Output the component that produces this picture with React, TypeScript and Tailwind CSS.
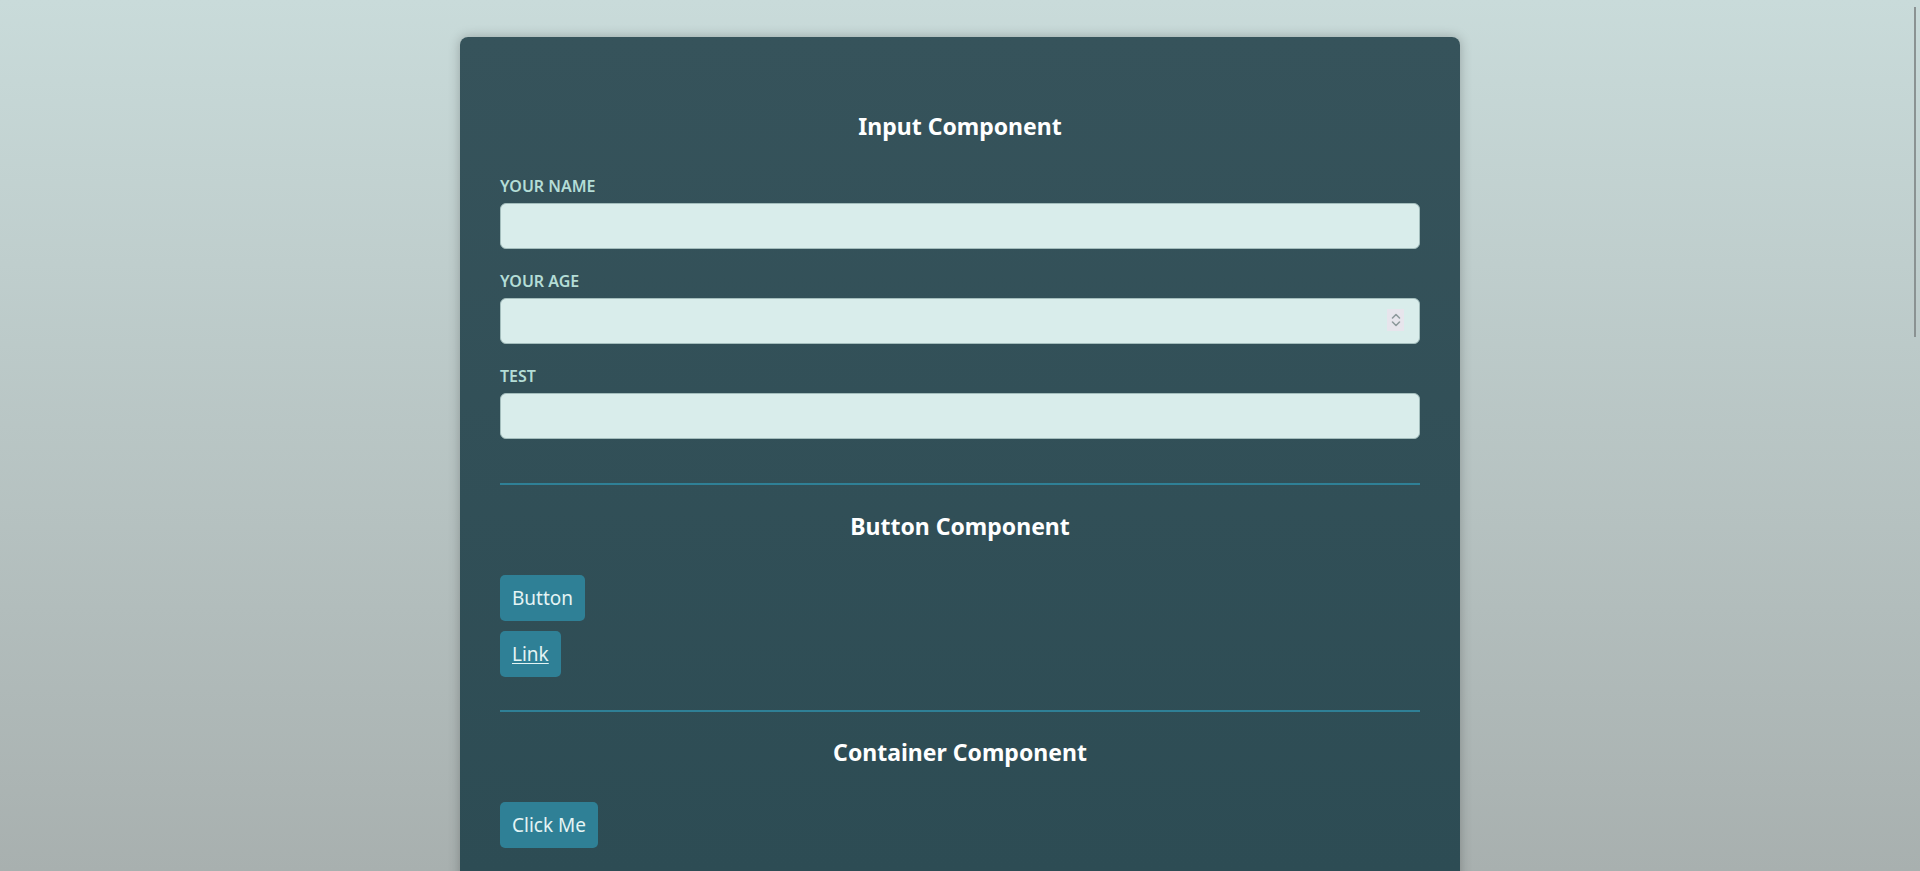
import React from "react";

function Field({ label, children }: { label: string; children: React.ReactNode }) {
  return (
    <div>
      <label className="block text-base leading-6 font-semibold text-[#b4ddd6] mb-[5px]">{label}</label>
      {children}
    </div>
  );
}

const inputCls =
  "block w-full h-[46px] rounded-[6px] border border-[#a3bdbc] bg-[#d9edeb] px-3 text-[#1f3a40] outline-none";

const btnCls =
  "inline-flex items-center h-[46px] px-3 rounded-[5px] bg-[#2f8096] text-[19px] text-[#e4f4f4]";

export default function App() {
  return (
    <div className="min-h-screen flex justify-center pt-[37px] pb-[40px] bg-[linear-gradient(180deg,#c9dbda_0px,#a8b0af_871px)] font-['Noto_Sans',sans-serif]">
      <div className="w-[1000px] min-h-[2200px] rounded-lg px-10 pt-[73px] bg-[linear-gradient(180deg,#36535b_0px,#2d4c54_834px)] shadow-[0_0_12px_rgba(0,0,0,0.25)]">
        <section>
          <h2 className="text-center text-[23px] leading-8 font-bold text-white">Input Component</h2>
          <div className="mt-8 flex flex-col gap-5">
            <Field label="YOUR NAME">
              <input type="text" className={inputCls} />
            </Field>
            <Field label="YOUR AGE">
              <div className="relative">
                <input type="text" className={inputCls} />
                <div className="absolute right-[16px] top-[11px] w-[17px] h-[22px] bg-[#e7e5ec] flex items-center justify-center">
                  <svg width="12" height="18" viewBox="0 0 12 18" fill="none" stroke="#8e9a9c" strokeWidth="1.6" strokeLinecap="round" strokeLinejoin="round">
                    <path d="M2.5 7 L6 3.5 L9.5 7" />
                    <path d="M2.5 11 L6 14.5 L9.5 11" />
                  </svg>
                </div>
              </div>
            </Field>
            <Field label="TEST">
              <input type="text" className={inputCls} />
            </Field>
          </div>
        </section>

        <div className="mt-[44px] h-[2px] bg-[#2f8096]" />

        <section className="pt-[25px]">
          <h2 className="text-center text-[23px] leading-8 font-bold text-white">Button Component</h2>
          <div className="mt-[33px] flex flex-col items-start gap-[10px]">
            <button type="button" className={btnCls}>Button</button>
            <a href="#" className={btnCls + " underline underline-offset-2"}>Link</a>
          </div>
        </section>

        <div className="mt-[33px] h-[2px] bg-[#2f8096]" />

        <section className="pt-[24px]">
          <h2 className="text-center text-[23px] leading-8 font-bold text-white">Container Component</h2>
          <div className="mt-[34px] flex flex-col items-start">
            <button type="button" className={btnCls}>Click Me</button>
          </div>
        </section>
      </div>
      <div className="fixed right-[4px] top-[7px] w-[2px] h-[330px] bg-[#8a9292]" />
    </div>
  );
}
